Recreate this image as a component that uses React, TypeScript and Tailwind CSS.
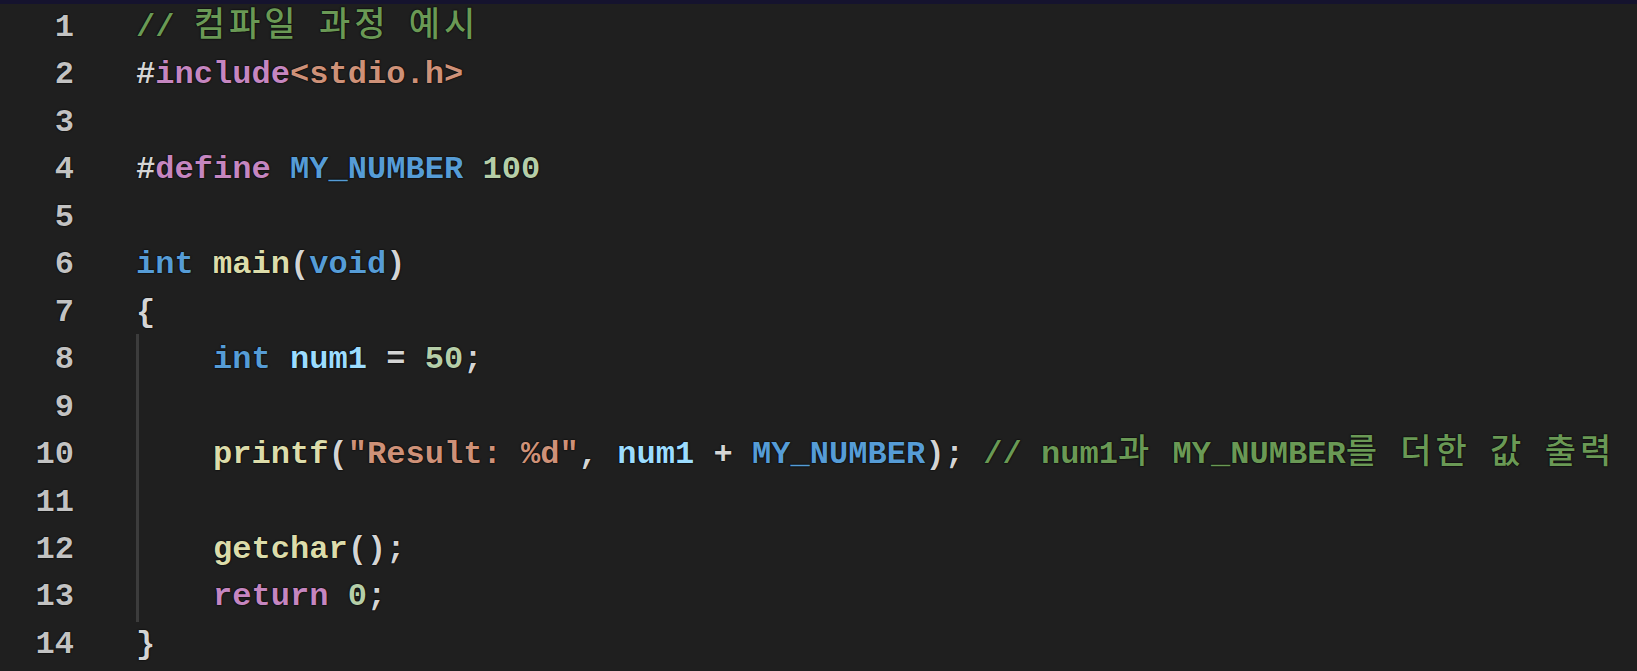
const C = {
  com: "text-[#6a9955]",
  kw: "text-[#c586c0]",
  blue: "text-[#569cd6]",
  fn: "text-[#dcdcaa]",
  str: "text-[#ce9178]",
  num: "text-[#b5cea8]",
  vr: "text-[#9cdcfe]",
  pl: "text-[#d4d4d4]",
};

type Tok = [string, string];

const lines: Tok[][] = [
  [["// ", C.com], ["@컴파일", C.com], [" ", C.com], ["@과정", C.com], [" ", C.com], ["@예시", C.com]],
  [["#", C.pl], ["include", C.kw], ["<stdio.h>", C.str]],
  [],
  [["#", C.pl], ["define", C.kw], [" ", C.pl], ["MY_NUMBER", C.blue], [" ", C.pl], ["100", C.num]],
  [],
  [["int", C.blue], [" ", C.pl], ["main", C.fn], ["(", C.pl], ["void", C.blue], [")", C.pl]],
  [["{", C.pl]],
  [["    ", C.pl], ["int", C.blue], [" ", C.pl], ["num1", C.vr], [" = ", C.pl], ["50", C.num], [";", C.pl]],
  [],
  [
    ["    ", C.pl],
    ["printf", C.fn],
    ["(", C.pl],
    ['"Result: %d"', C.str],
    [", ", C.pl],
    ["num1", C.vr],
    [" + ", C.pl],
    ["MY_NUMBER", C.blue],
    [");", C.pl],
    [" // num1", C.com],
    ["@과", C.com],
    [" MY_NUMBER", C.com],
    ["@를", C.com],
    [" ", C.com],
    ["@더한", C.com],
    [" ", C.com],
    ["@값", C.com],
    [" ", C.com],
    ["@출력", C.com],
  ],
  [],
  [["    ", C.pl], ["getchar", C.fn], ["();", C.pl]],
  [["    ", C.pl], ["return", C.kw], [" ", C.pl], ["0", C.num], [";", C.pl]],
  [["}", C.pl]],
];

export default function App() {
  return (
    <div className="w-[1637px] h-[671px] overflow-hidden bg-[#1f1f1f] font-['Liberation_Mono','Noto_Sans_CJK_KR',monospace] font-bold text-[32.1px] [text-shadow:0_0_2px_#000,0_0_1px_#000]">
      <div className="h-[4px] bg-[#15132e]" />
      <div className="relative flex">
        <div className="w-[74px] text-right text-[#c2c2c2]">
          {lines.map((_, i) => (
            <div key={i} className="h-[47.46px] leading-[47.46px] whitespace-pre">
              {i + 1}
            </div>
          ))}
        </div>
        <div className="relative ml-[62px]">
          {/* indent guide */}
          <div className="absolute left-0 top-[330px] h-[288px] w-[3px] bg-[#3c3c3c]" />
          {lines.map((toks, i) => (
            <div key={i} className="h-[47.46px] leading-[47.46px] whitespace-pre">
              {toks.map(([t, c], j) =>
                t.startsWith("@") ? (
                  <span key={j} className={c + " text-[34px] leading-none tracking-[4px] font-medium"}>
                    {t.slice(1)}
                  </span>
                ) : (
                  <span key={j} className={c}>
                    {t}
                  </span>
                )
              )}
            </div>
          ))}
        </div>
      </div>
    </div>
  );
}
